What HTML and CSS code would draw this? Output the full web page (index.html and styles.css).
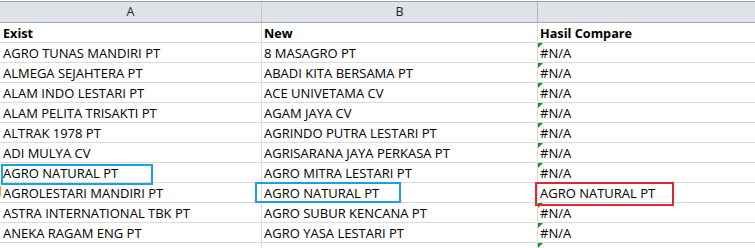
FILE: index.html
```html
<!DOCTYPE html>
<html>
<head>
<meta charset="utf-8">
<link rel="stylesheet" href="styles.css">
</head>
<body>
<div class="sheet">
  <div class="colheads">
    <div class="ch ch-a">A</div>
    <div class="ch ch-b">B</div>
    <div class="ch ch-c"></div>
  </div>
  <div class="grid">
    <div class="cell a bold">Exist</div><div class="cell b bold">New</div><div class="cell c bold">Hasil Compare</div>
    <div class="cell a">AGRO TUNAS MANDIRI PT</div><div class="cell b">8 MASAGRO PT</div><div class="cell c err">#N/A</div>
    <div class="cell a">ALMEGA SEJAHTERA PT</div><div class="cell b">ABADI KITA BERSAMA PT</div><div class="cell c err">#N/A</div>
    <div class="cell a">ALAM INDO LESTARI PT</div><div class="cell b">ACE UNIVETAMA CV</div><div class="cell c err">#N/A</div>
    <div class="cell a">ALAM PELITA TRISAKTI PT</div><div class="cell b">AGAM JAYA CV</div><div class="cell c err">#N/A</div>
    <div class="cell a">ALTRAK 1978 PT</div><div class="cell b">AGRINDO PUTRA LESTARI PT</div><div class="cell c err">#N/A</div>
    <div class="cell a">ADI MULYA CV</div><div class="cell b">AGRISARANA JAYA PERKASA PT</div><div class="cell c err">#N/A</div>
    <div class="cell a">AGRO NATURAL PT</div><div class="cell b">AGRO MITRA LESTARI PT</div><div class="cell c err">#N/A</div>
    <div class="cell a">AGROLESTARI MANDIRI PT</div><div class="cell b">AGRO NATURAL PT</div><div class="cell c">AGRO NATURAL PT</div>
    <div class="cell a">ASTRA INTERNATIONAL TBK PT</div><div class="cell b">AGRO SUBUR KENCANA PT</div><div class="cell c err">#N/A</div>
    <div class="cell a">ANEKA RAGAM ENG PT</div><div class="cell b">AGRO YASA LESTARI PT</div><div class="cell c err">#N/A</div>
    <div class="cell a"></div><div class="cell b"></div><div class="cell c err"></div>
  </div>
  <span class="mark-orange"></span>
  <span class="box box-a"></span>
  <span class="box box-b"></span>
  <span class="box box-red"></span>
</div>
</body>
</html>
```

FILE: styles.css
```css
html, body {
  margin: 0;
  padding: 0;
  background: #ffffff;
}
.sheet {
  position: relative;
  width: 755px;
  height: 248px;
  overflow: hidden;
  padding-top: 1px;
  box-sizing: border-box;
  background: #ffffff;
  font-family: "Open Sans", "Liberation Sans", sans-serif;
  font-size: 13px;
  color: #000000;
}
.colheads {
  display: grid;
  grid-template-columns: 262px 276px 1fr;
  height: 22px;
  box-sizing: border-box;
  border-top: 1px solid #9ea3aa;
  border-bottom: 1px solid #a3a8ae;
  background: #dfe2e7;
}
.ch {
  border-right: 1px solid #c3c6cb;
  text-align: center;
  line-height: 20px;
  font-size: 12.5px;
  color: #262626;
}
.ch-b { border-right-color: #b0b3b8; }
.ch-c { border-right: none; }
.grid {
  display: grid;
  grid-template-columns: 262px 276px 1fr;
  grid-auto-rows: 20px;
}
.cell {
  position: relative;
  box-sizing: border-box;
  border-right: 1px solid #d9dadb;
  border-bottom: 1px solid #d9dadb;
  padding: 0 0 0 3px;
  line-height: 20px;
  white-space: nowrap;
  overflow: hidden;
}
.cell.b, .cell.c { padding-left: 2px; }
.cell.c { border-right: none; }
.bold { font-weight: bold; font-size: 12.7px; }
.err::before {
  content: "";
  position: absolute;
  left: 0;
  top: 0;
  width: 0;
  height: 0;
  border-top: 5px solid #1a8a28;
  border-right: 5px solid transparent;
}
.mark-orange {
  position: absolute;
  left: 0;
  top: 186px;
  width: 1px;
  height: 10px;
  background: #f0a030;
}
.box {
  position: absolute;
  box-sizing: border-box;
  border: 2px solid #1ba1e2;
}
.box-a { left: 1px; top: 164px; width: 152px; height: 21px; }
.box-b { left: 255px; top: 182px; width: 146px; height: 21px; }
.box-red { left: 535px; top: 182px; width: 139px; height: 24px; border-color: #e3262d; }
```
